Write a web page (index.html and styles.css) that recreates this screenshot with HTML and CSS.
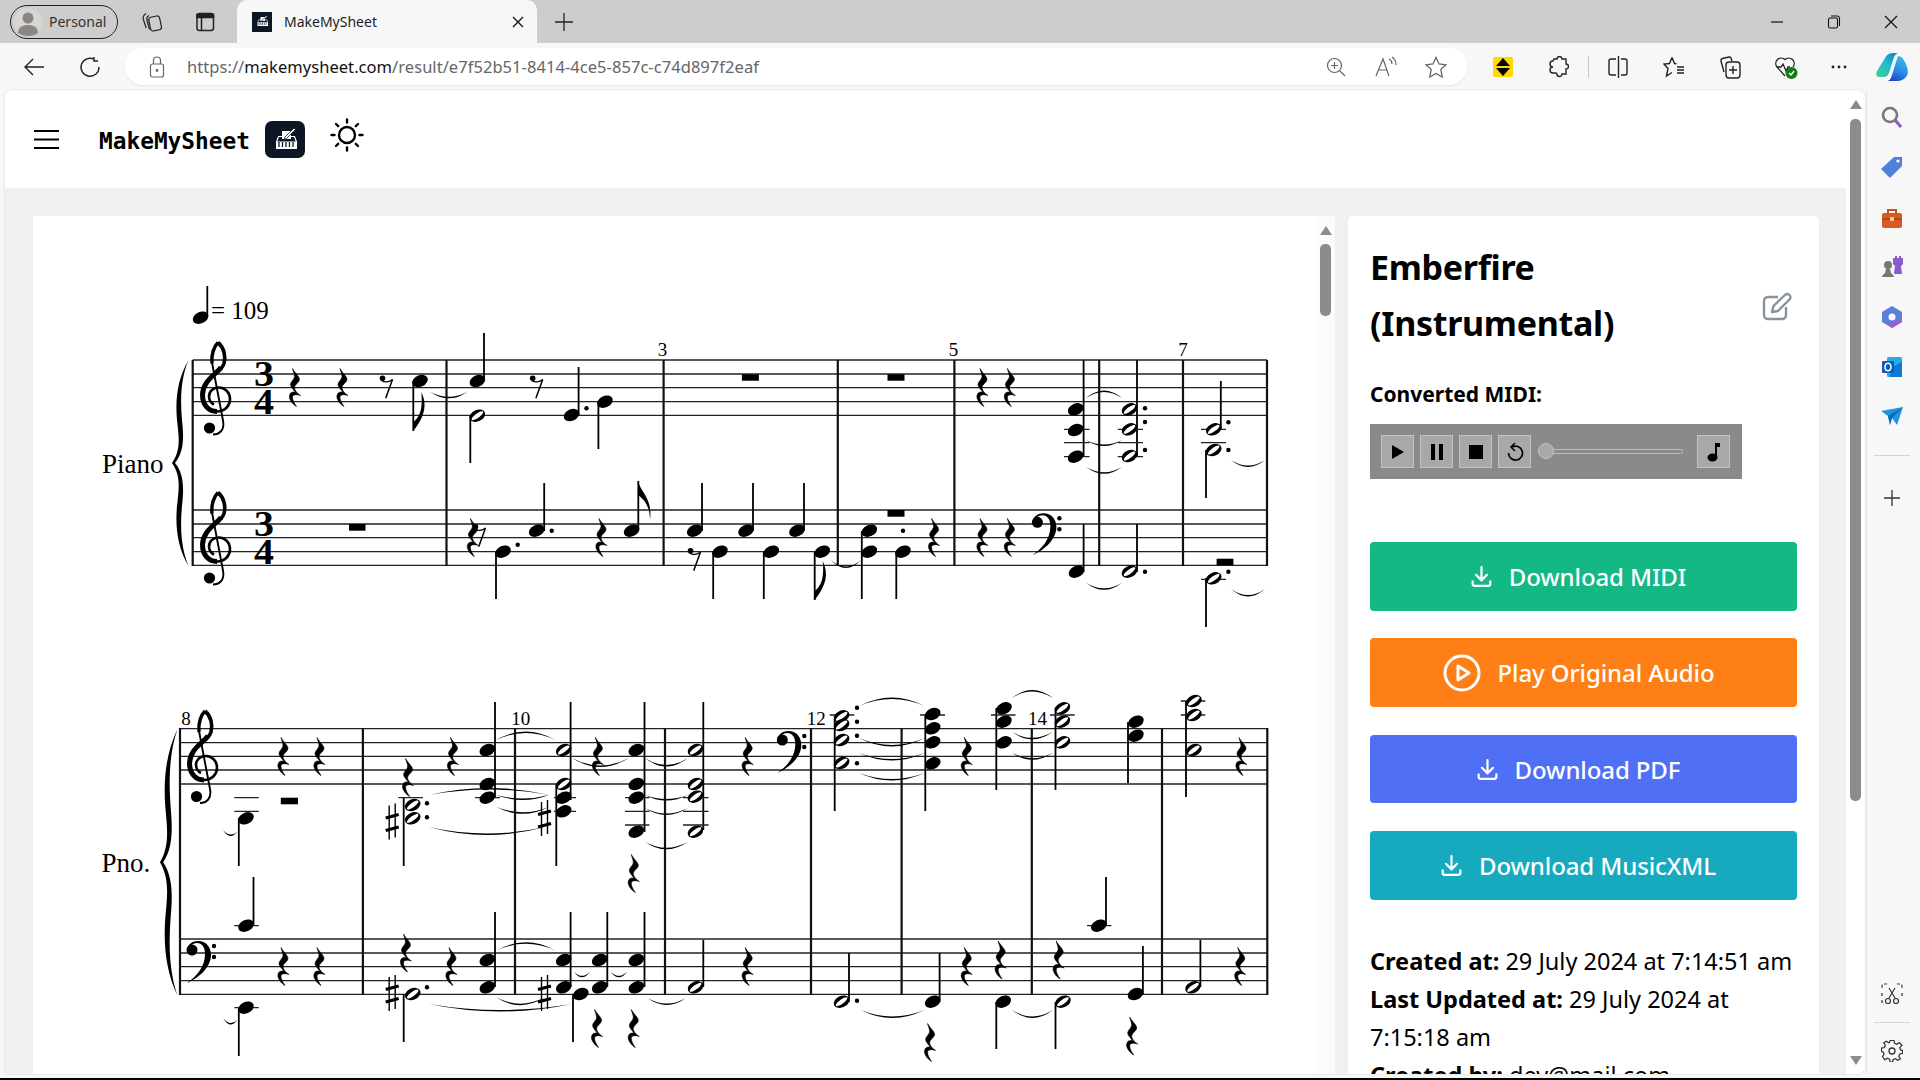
FILE: index.html
```html
<!DOCTYPE html>
<html lang="en">
<head>
    <meta charset="UTF-8">
    <title>MakeMySheet</title>
    <link rel="stylesheet" href="styles.css">
</head>
<body>

    <svg class="sprites" width="0" height="0">
        <defs>
            <g id="logo-mark">
                <path d="M13.500 15.500h16l2 5.500H11.500z" fill="none" stroke="#fff" stroke-width="1.200"/>
                <path d="M11 21h21v7H11z" fill="#fff"/>
                <path d="M14 21v5M17.500 21v5M21 21v5M24.500 21v5M28 21v5" stroke="#0d1624" stroke-width="1.300"/>
                <path d="M17 10h9v8h-9z" fill="#fff"/>
                <path d="M20 16l9-9 1.500 1.500-9 9-2.500 1z" fill="#fff" stroke="#0d1624" stroke-width=".8"/>
            </g>
            <path id="dl" d="M4 17v2a2 2 0 0 0 2 2h12a2 2 0 0 0 2-2v-2M7 11l5 5 5-5M12 4v12" fill="none" stroke="#fff" stroke-width="2" stroke-linecap="round" stroke-linejoin="round"/>

            <g id="n"><ellipse rx="8.200" ry="5.700" transform="rotate(-25)"/></g>
            <g id="h"><ellipse rx="8.200" ry="5.700" transform="rotate(-25)"/><ellipse rx="7" ry="2.200" transform="rotate(-36)" fill="#fff"/></g>
            <path id="qr" stroke="#000" stroke-width=".6" d="M-3-19C-1-15 4-11 4-8 4-5-1-3-1 0-1 3 2 6 5 8 1 6.500-3.500 7-3 10-3 13-1 16 1 19-3 17-7 11-6 8-5.500 4.500-2 4 0 5-3 1-5-1-5-3-5-6-1-8-1-11-1-14-2.500-16-3-19Z"/>
            <g id="er">
                <circle cx="-2" cy="-8.700" r="2.800"/>
                <path d="M-3-6.500C0-4.500 5-4.500 8-7.500" fill="none" stroke="#000" stroke-width="1.200"/>
                <path d="M8-7.500L1.200 11.300" fill="none" stroke="#000" stroke-width="1.500"/>
            </g>
            <g id="sh"><path d="M-3-17V17M3-19V15" stroke-width="1.400"/><path d="M-6.500-4.500L6.500-8M-6.500 8L6.500 4.500" stroke-width="3.200"/></g>
            <path id="fd" d="M0 0V-9C5-13 10-19 8-39 14-27 12-15 0 0Z"/>
            <path id="brace" d="M16.500 0C6 18 3 38 5 60 7 78 9 90 0 103 9 116 7 128 5 146 3 168 6 188 16.500 206 9 188 8 168 10 146 12 128 12 114 3 103 12 92 12 78 10 60 8 38 9 18 16.500 0Z"/>
            <g id="tc" fill="none" stroke="#000">
                <path d="M13 21C12 12 15 4 19 0" stroke-width="3.400"/>
                <path d="M19 0C25 5 27 14 25 21 24 24 23 25 22 26" stroke-width="3.600"/>
                <path d="M22 25C17 32 4 38 3.500 52 3.500 63 10 69 18 69" stroke-width="5"/>
                <path d="M18 69C26 69 31 63 31 57 31 49 25 45 20 45 14 45 10 49 10 54 10 58 13 61 15 62" stroke-width="2.600"/>
                <path d="M13 20L24 78C26 88 20 92 14 92" stroke-width="1.900"/>
                <circle cx="10.500" cy="85.500" r="5.600" fill="#000" stroke="none"/>
            </g>
            <g id="bc">
                <path d="M1 10C1 3 7 0 12 0 21 0 25 7 25 14 25 26 13 37 1 42 10 36 19 26 19 13 19 6 16 2 11 2 7 2 4 5 4 8Z"/>
                <circle cx="6" cy="9" r="5.500"/><circle cx="28" cy="5" r="2.200"/><circle cx="28" cy="16" r="2.200"/>
            </g>
        </defs>
    </svg>

    <header class="tabbar">
        <div class="profile">
            <svg class="avatar" viewBox="0 0 28 28"><circle cx="14" cy="14" r="14" fill="#d8d6d2"/><circle cx="14" cy="10" r="5.500" fill="#8a8682"/><path d="M4 25c0-6 5-8 10-8s10 2 10 8c-3 2-6 3-10 3s-7-1-10-3z" fill="#8a8682"/></svg>
            <span>Personal</span>
        </div>
        <button class="tabicon"><svg width="22" height="22" viewBox="0 0 22 22" fill="none" stroke="#222" stroke-width="1.200"><rect x="8.500" y="5.500" width="11" height="14" rx="2.500" transform="rotate(-12 14 12)"/><path d="M8 4.500C6 5.500 5.500 7 6 9l2.500 9.500M5 2.500C2.500 4 1.500 6 2.500 9l2.700 8"/></svg></button>
        <button class="tabicon"><svg width="20" height="20" viewBox="0 0 20 20" fill="none" stroke="#222" stroke-width="1.500"><rect x="2" y="1.500" width="16.500" height="17" rx="2.500"/><path d="M2 2.500h16.500v3H2z" fill="#222"/><path d="M6.500 5.500v13"/></svg></button>
        <div class="tab">
            <svg class="favicon" viewBox="0 0 40 40"><rect width="40" height="40" fill="#0d1624"/><use href="#logo-mark"/></svg>
            <span class="tab-title">MakeMySheet</span>
            <svg class="tab-close" width="12" height="12" viewBox="0 0 12 12" stroke="#111" stroke-width="1.300"><path d="M1 1l10 10M11 1L1 11"/></svg>
        </div>
        <svg class="newtab" width="18" height="18" viewBox="0 0 18 18" stroke="#222" stroke-width="1.300"><path d="M9 0v18M0 9h18"/></svg>
        <div class="winctl">
            <svg width="14" height="14" viewBox="0 0 14 14" stroke="#111" stroke-width="1.200"><path d="M1 7h12"/></svg>
            <svg width="14" height="14" viewBox="0 0 14 14" fill="none" stroke="#111" stroke-width="1.100"><rect x="1.500" y="3" width="9" height="10" rx="1.500"/><path d="M4 1h6a2.500 2.500 0 0 1 2.500 2.500V11"/></svg>
            <svg width="14" height="14" viewBox="0 0 14 14" stroke="#111" stroke-width="1.200"><path d="M1 1l12 12M13 1L1 13"/></svg>
        </div>
    </header>

    <div class="toolbar">
        <button class="tool"><svg width="22" height="20" viewBox="0 0 22 20" fill="none" stroke="#222" stroke-width="1.400"><path d="M21 10H2M10 2l-8 8 8 8"/></svg></button>
        <button class="tool"><svg width="22" height="22" viewBox="0 0 22 22" fill="none" stroke="#222" stroke-width="1.400"><path d="M15.500 3.500A9 9 0 1 0 20 11M15 1v4h4"/></svg></button>
        <div class="address">
            <svg width="16" height="22" viewBox="0 0 16 22" fill="none" stroke="#666" stroke-width="1.200"><rect x="1.500" y="8" width="13" height="13" rx="2"/><path d="M4.500 8V4.500a3.500 3.500 0 0 1 7 0V8"/><circle cx="8" cy="14.500" r=".8" fill="#666"/></svg>
            <div class="url">https://<b>makemysheet.com</b>/result/e7f52b51-8414-4ce5-857c-c74d897f2eaf</div>
            <button class="addr-icon"><svg width="20" height="20" viewBox="0 0 20 20" fill="none" stroke="#666" stroke-width="1.200"><circle cx="8.500" cy="8.500" r="7"/><path d="M13.500 13.500L19 19M5 8.500h7M8.500 5v7"/></svg></button>
            <button class="addr-icon"><svg width="22" height="22" viewBox="0 0 22 22" fill="none" stroke="#666" stroke-width="1.200"><path d="M1 20L8 3l6 17M3.500 14h9M14 3c2 1 3 3 3 5M17 1c3 2 4 5 4 8"/></svg></button>
            <button class="addr-icon"><svg width="22" height="22" viewBox="0 0 22 22" fill="none" stroke="#666" stroke-width="1.300"><path d="M11 1.500l3 6.500 7 .8-5.200 4.800L17.300 21 11 17.400 4.700 21l1.500-7.400L1 8.800 8 8z"/></svg></button>
        </div>
        <button class="tool first-ext"><svg width="20" height="20" viewBox="0 0 20 20"><rect width="20" height="20" rx="2" fill="#ffd800"/><path d="M10 1l7 8H3zM10 19l-7-8h14z"/></svg></button>
        <button class="tool"><svg width="20" height="22" viewBox="0 0 20 22" fill="none" stroke="#222" stroke-width="1.400"><path d="M8 3a2.500 2.500 0 0 1 5 0h4v5a2.500 2.500 0 0 1 0 5v5h-4a2.500 2.500 0 0 1-5 0l-1-1H4a2 2 0 0 1 0-6 2 2 0 0 1 0-6l1-2z"/></svg></button>
        <span class="tool-sep"></span>
        <button class="tool"><svg width="22" height="24" viewBox="0 0 22 24" fill="none" stroke="#222" stroke-width="1.400"><path d="M9 4H4a2 2 0 0 0-2 2v12a2 2 0 0 0 2 2h5M14 4h4a2 2 0 0 1 2 2v12a2 2 0 0 1-2 2h-4M11.500 1v22"/></svg></button>
        <button class="tool"><svg width="22" height="22" viewBox="0 0 22 22" fill="none" stroke="#222" stroke-width="1.400"><path d="M9 1.500l2.500 6 2 .2M9 1.500l-2.500 6L1 8l4 4.500L3.500 20 9 16.500M14 11h7M14 14h7M14 17h7"/></svg></button>
        <button class="tool"><svg width="22" height="24" viewBox="0 0 22 24" fill="none" stroke="#222" stroke-width="1.400"><path d="M5 17L2 6a2 2 0 0 1 1.500-2.500L10 2a2 2 0 0 1 2 1l1 3"/><rect x="7" y="7" width="14" height="16" rx="3"/><path d="M14 11v8M10 15h8"/></svg></button>
        <button class="tool"><svg width="24" height="24" viewBox="0 0 24 24"><path d="M11 21L3 12a5.500 5.500 0 0 1 8-7.500A5.500 5.500 0 0 1 19 12M3 12h4l2 -3 3 7 2-4h2" fill="none" stroke="#222" stroke-width="1.300"/><circle cx="17.500" cy="18" r="6" fill="#107c10"/><path d="M15 18l2 2 3-4" fill="none" stroke="#fff" stroke-width="1.400"/></svg></button>
        <button class="tool tool-more"><svg width="16" height="4" viewBox="0 0 16 4" fill="#222"><circle cx="2" cy="2" r="1.400"/><circle cx="8" cy="2" r="1.400"/><circle cx="14" cy="2" r="1.400"/></svg></button>
        <button class="tool"><svg width="32" height="28" viewBox="0 0 32 28"><defs><linearGradient id="cp1" x1="0" y1="1" x2=".8" y2="0"><stop offset="0" stop-color="#3fd09a"/><stop offset=".6" stop-color="#22b8cf"/><stop offset="1" stop-color="#1488c8"/></linearGradient><linearGradient id="cp2" x1=".7" y1="0" x2=".3" y2="1"><stop offset="0" stop-color="#3fb8f0"/><stop offset=".6" stop-color="#2a86e8"/><stop offset="1" stop-color="#1c44c8"/></linearGradient></defs><path d="M9 5C11 1 14 0 18 0H22C19 1 18 4 17 7L13 20C12 23 10 24 7 24H3C0 24 0 21 1 18Z" fill="url(#cp1)"/><path d="M22 3C25 3 27 5 29 9 32 15 33 21 30 24 28 26 26 28 20 28H11C14 28 15 25 16 22L20 9C21 6 22 4 22 3Z" fill="url(#cp2)"/></svg></button>
    </div>

    <div class="window">
        <div class="page">
            <div class="viewport">
                <div class="topbar">
                    <svg class="burger" width="25" height="19" viewBox="0 0 25 19" stroke="#000" stroke-width="2"><path d="M0 1h25M0 9.500h25M0 18h25"/></svg>
                    <span class="brand">MakeMySheet</span>
                    <svg class="logo" viewBox="0 0 40 37"><rect width="40" height="37" rx="7" fill="#0d1624"/><use href="#logo-mark"/></svg>
                    <svg class="sun" width="34" height="34" viewBox="0 0 34 34" fill="none" stroke="#000" stroke-width="2.400" stroke-linecap="round"><circle cx="17" cy="17" r="8"/><path d="M17 1.500v3M17 29.500v3M1.500 17h3M29.500 17h3M6 6l2.200 2.200M25.800 25.800L28 28M6 28l2.200-2.200M25.800 8.200L28 6"/></svg>
                </div>

                <main class="content">
                    <section class="score-pane">
                        <svg class="score" viewBox="33 216 1283 862" width="1283" height="862">
                            <!-- first system -->
                            <path class="staff" d="M192.700 360H1267M192.700 374H1267M192.700 387.700H1267M192.700 401.700H1267M192.700 415.300H1267M192.700 510H1267M192.700 524H1267M192.700 537.700H1267M192.700 551.700H1267M192.700 565.300H1267"/>
                            <path class="bar" d="M192.700 360V566M446.500 360V566M663.600 360V566M837.800 360V566M954.400 360V566M1099.200 360V566M1183 360V566M1267 360V566"/>
                            <path class="stem" d="M207.300 286V317M413.300 381V431M484 333V381M470.300 416V463M578.600 367V415M598.400 402V449M496 552V599M544.200 483V531M638.300 481V531M702 483V531M753 483V531M804 483V531M713.200 552V599M763.800 552V599M814.700 552V600M861.800 531V599M896.300 552V599M1083.600 360V457M1137 360V456M1220.800 381V429M1206 450V498M1083.600 524V572M1137 524V572M1206 578V627"/>
                            <path class="ledger" d="M1064 429.300H1089.500M1064 442.700H1089.500M1064 456.700H1089.500M1117.700 429.300H1143M1117.700 442.700H1143M1117.700 456.700H1143M1201 429.300H1226M1201 442.700H1226M1201 579.300H1226"/>

                            <use href="#n" x="200.600" y="317.700"/>
                            <text class="tempo" x="211" y="319">= 109</text>
                            <text class="mnum" x="662.500" y="356">3</text>
                            <text class="mnum" x="953.600" y="356">5</text>
                            <text class="mnum" x="1183" y="356">7</text>
                            <text class="instr" x="102" y="473">Piano</text>
                            <use href="#brace" transform="translate(172 360)"/>
                            <use href="#tc" x="199" y="342.500"/>
                            <use href="#tc" x="199" y="492.500"/>
                            <text class="tsig" x="264" y="386" textLength="20" lengthAdjust="spacingAndGlyphs">3</text>
                            <text class="tsig" x="264" y="413.500" textLength="20" lengthAdjust="spacingAndGlyphs">4</text>
                            <text class="tsig" x="264" y="536" textLength="20" lengthAdjust="spacingAndGlyphs">3</text>
                            <text class="tsig" x="264" y="563.500" textLength="20" lengthAdjust="spacingAndGlyphs">4</text>

                            <use href="#qr" x="295.500" y="387.500"/>
                            <use href="#qr" x="343" y="387.500"/>
                            <use href="#er" x="384.500" y="387"/>
                            <use href="#n" x="420" y="381"/>
                            <use href="#fd" transform="translate(413.300 431)"/>
                            <use href="#n" x="477.400" y="381"/>
                            <use href="#er" x="534.700" y="387"/>
                            <use href="#h" x="477.400" y="415.700"/>
                            <use href="#n" x="571.500" y="415"/>
                            <circle cx="586.500" cy="408.300" r="2.200"/>
                            <use href="#n" x="605" y="401.700"/>
                            <rect x="741.900" y="374.300" width="17" height="6.400"/>
                            <rect x="887.500" y="374.300" width="17" height="6.400"/>
                            <use href="#qr" x="983" y="387.500"/>
                            <use href="#qr" x="1010.400" y="387.500"/>
                            <use href="#n" x="1075.600" y="409.300"/>
                            <use href="#n" x="1075.600" y="430"/>
                            <use href="#n" x="1075.600" y="456.700"/>
                            <use href="#h" x="1129.500" y="409.300"/>
                            <use href="#h" x="1129.500" y="429.300"/>
                            <use href="#h" x="1129.500" y="456"/>
                            <circle cx="1145" cy="408.300" r="2.200"/><circle cx="1145" cy="422" r="2.200"/><circle cx="1145" cy="450" r="2.200"/>
                            <use href="#h" x="1213.700" y="429.300"/>
                            <use href="#h" x="1213.700" y="450"/>
                            <circle cx="1228.400" cy="422.300" r="2.200"/><circle cx="1228.400" cy="450" r="2.200"/>

                            <rect x="349" y="524" width="16.500" height="6.700"/>
                            <use href="#qr" x="473.400" y="537.500"/>
                            <use href="#er" x="477.500" y="535.500"/>
                            <use href="#n" x="503" y="551.700"/>
                            <circle cx="517.700" cy="544.700" r="2.200"/>
                            <use href="#n" x="536.700" y="530.700"/>
                            <circle cx="551.700" cy="530.700" r="2.200"/>
                            <use href="#qr" x="602" y="537.500"/>
                            <use href="#n" x="631.600" y="530.700"/>
                            <path d="M638.300 481C640 492 653 498 650 520 650 505 643 499 638.300 495Z"/>
                            <use href="#n" x="694.700" y="530.700"/>
                            <use href="#n" x="746" y="530.700"/>
                            <use href="#n" x="797" y="530.700"/>
                            <use href="#er" x="692.500" y="559.500"/>
                            <use href="#n" x="720" y="551.700"/>
                            <use href="#n" x="771.300" y="551.700"/>
                            <use href="#n" x="822.300" y="551.700"/>
                            <use href="#fd" transform="translate(814.700 600)"/>
                            <use href="#n" x="869.400" y="530.700"/>
                            <use href="#n" x="869.400" y="551.700"/>
                            <rect x="887.500" y="510" width="17" height="6.700"/>
                            <circle cx="903" cy="530.700" r="2.200"/>
                            <use href="#n" x="903" y="551.700"/>
                            <use href="#qr" x="934.600" y="537.500"/>
                            <use href="#qr" x="983" y="537.500"/>
                            <use href="#qr" x="1010.400" y="537.500"/>
                            <use href="#bc" x="1031.400" y="513.300"/>
                            <use href="#n" x="1076.500" y="571.700"/>
                            <use href="#h" x="1129.500" y="571.700"/>
                            <circle cx="1145" cy="571.700" r="2.200"/>
                            <use href="#h" x="1213.700" y="578.300"/>
                            <circle cx="1228.400" cy="571.700" r="2.200"/>
                            <rect x="1216.600" y="558.700" width="16.800" height="6.600"/>

                            <path d="M430 391.700Q449 405 467.500 391.700Q449 402 430 391.700ZM1086 398Q1104 383 1122 398Q1104 386 1086 398ZM1086 440Q1104 452 1122 440Q1104 449 1086 440ZM1086 466.700Q1104 481 1122 466.700Q1104 478 1086 466.700ZM1231 460Q1248 474 1265 460Q1248 471 1231 460ZM830.700 560Q846 576 861 560Q846 573 830.700 560ZM1086 582.700Q1104 597 1122 582.700Q1104 594 1086 582.700ZM1231 589Q1248 604 1265 589Q1248 601 1231 589Z"/>

                            <!-- second system -->
                            <path class="staff" d="M180 728.700H1267.300M180 742.700H1267.300M180 756.300H1267.300M180 770H1267.300M180 784H1267.300M180 939H1267.300M180 953H1267.300M180 966.700H1267.300M180 980.700H1267.300M180 994.300H1267.300"/>
                            <path class="bar" d="M180 728V995M362.900 728V995M515 728V995M665 728V995M811 728V995M901.600 728V995M1031.800 728V995M1162 728V995M1267.300 728V995"/>
                            <path class="stem" d="M238.800 818V866M253.500 877V926M238.800 1008V1056M403.700 798V866M495 702V797M570.600 702V800M556.300 784V866M644.500 702V832M703.300 702V830M834.700 716V811M925.300 714V811M996.300 708V790M1055.500 708V790M1128 722V783M1186 701V797M403.700 994V1042M495 912V987M570.600 912V987M573 994V1042M607.300 912V987M644.500 912V987M703.300 940V987M849 953V1002M939.600 953V1002M996.300 1002V1049M1055.500 1002V1049M1106 877V926M1142.900 946V994M1200.400 940V987"/>
                            <path class="ledger" d="M234.300 797.700H258.800M234.300 811.300H258.800M234.300 925.700H258.800M234.300 1007.700H258.800M398.400 797.700H422.900M475 797.700H500M554 797.700H576M554 811.300H576M625 797.700H649.400M625 811.300H649.400M625 825H649.400M683 797.700H708.600M683 811.300H708.600M683 825H708.600M829.800 715H854.300M920 715H945M991 715H1015.500M1050 715H1074.700M1180.800 701H1205.300M1180.800 715H1205.300M1087 925.700H1111.400"/>

                            <text class="mnum" x="186" y="725">8</text>
                            <text class="mnum" x="520.800" y="725">10</text>
                            <text class="mnum" x="816.300" y="725">12</text>
                            <text class="mnum" x="1037.600" y="725">14</text>
                            <text class="instr" x="101.500" y="872.300">Pno.</text>
                            <use href="#brace" transform="translate(160 729) scale(1.060 1.294)"/>
                            <use href="#tc" x="186" y="711"/>
                            <use href="#bc" transform="translate(186 941)"/>

                            <use href="#qr" x="284" y="756.500"/>
                            <use href="#qr" x="320" y="756.500"/>
                            <use href="#n" x="246" y="818.300"/>
                            <rect x="280.800" y="797.700" width="17.200" height="6.600"/>
                            <use href="#n" x="246" y="925.700"/>
                            <use href="#qr" x="284" y="966.500"/>
                            <use href="#qr" x="320" y="966.500"/>
                            <use href="#n" x="246" y="1007.700"/>
                            <use href="#qr" x="408.600" y="777.500"/>
                            <use href="#qr" x="453.500" y="756.500"/>
                            <use href="#sh" class="acc" x="392.200" y="822.500"/>
                            <use href="#h" x="412.700" y="805"/>
                            <use href="#h" x="412.700" y="818.300"/>
                            <circle cx="427" cy="803.300" r="2.200"/><circle cx="427" cy="817.300" r="2.200"/>
                            <use href="#n" x="487.300" y="750"/>
                            <use href="#n" x="487.300" y="784"/>
                            <use href="#n" x="487.300" y="797.700"/>
                            <use href="#h" x="563.700" y="750"/>
                            <use href="#h" x="563.700" y="784"/>
                            <use href="#n" x="563.700" y="797.700"/>
                            <use href="#n" x="563.700" y="811.300"/>
                            <use href="#sh" class="acc" x="544.500" y="819"/>
                            <use href="#qr" x="598.400" y="756.500"/>
                            <use href="#n" x="636.300" y="750"/>
                            <use href="#n" x="636.300" y="784"/>
                            <use href="#n" x="636.300" y="797.700"/>
                            <use href="#n" x="636.300" y="831.700"/>
                            <use href="#qr" x="634.300" y="873.500"/>
                            <use href="#h" x="695.500" y="750"/>
                            <use href="#h" x="695.500" y="784"/>
                            <use href="#h" x="695.500" y="796.700"/>
                            <use href="#h" x="695.500" y="831.700"/>
                            <use href="#qr" x="748.200" y="756.500"/>
                            <use href="#bc" x="776.300" y="729" transform="translate(0 2)"/>
                            <use href="#h" x="841.600" y="716.300"/>
                            <use href="#h" x="841.600" y="725"/>
                            <use href="#h" x="841.600" y="740"/>
                            <use href="#h" x="841.600" y="763"/>
                            <circle cx="857" cy="707.700" r="2.200"/><circle cx="857" cy="721.700" r="2.200"/><circle cx="857" cy="735.700" r="2.200"/><circle cx="857" cy="763.300" r="2.200"/>
                            <use href="#n" x="932.700" y="714"/>
                            <use href="#n" x="932.700" y="728.300"/>
                            <use href="#n" x="932.700" y="742.300"/>
                            <use href="#n" x="932.700" y="763.300"/>
                            <use href="#qr" x="967.300" y="756.500"/>
                            <use href="#n" x="1004" y="708.300"/>
                            <use href="#n" x="1004" y="721.700"/>
                            <use href="#n" x="1004" y="742.300"/>
                            <use href="#h" x="1062.400" y="708.300"/>
                            <use href="#h" x="1062.400" y="721.700"/>
                            <use href="#h" x="1062.400" y="742.300"/>
                            <use href="#n" x="1136" y="721.700"/>
                            <use href="#n" x="1136" y="735.700"/>
                            <use href="#h" x="1193.900" y="701"/>
                            <use href="#h" x="1193.900" y="715"/>
                            <use href="#h" x="1193.900" y="750"/>
                            <use href="#qr" x="1242" y="756.500"/>

                            <use href="#qr" x="406.500" y="953"/>
                            <use href="#qr" x="452" y="966.500"/>
                            <use href="#sh" class="acc" x="392.200" y="994"/>
                            <use href="#h" x="412.700" y="994"/>
                            <circle cx="427" cy="987.300" r="2.200"/>
                            <use href="#n" x="487.300" y="960"/>
                            <use href="#n" x="487.300" y="987.300"/>
                            <use href="#sh" class="acc" x="544.500" y="994"/>
                            <use href="#n" x="563.700" y="960"/>
                            <use href="#n" x="563.700" y="987.300"/>
                            <use href="#n" x="580.800" y="994"/>
                            <use href="#n" x="599.600" y="960"/>
                            <use href="#n" x="599.600" y="987.300"/>
                            <use href="#n" x="636.300" y="960"/>
                            <use href="#n" x="636.300" y="987.300"/>
                            <use href="#qr" x="597.600" y="1028.500"/>
                            <use href="#qr" x="634.300" y="1028.500"/>
                            <use href="#h" x="695.500" y="987.300"/>
                            <use href="#qr" x="748.200" y="966.500"/>
                            <use href="#h" x="841.600" y="1001.700"/>
                            <circle cx="857" cy="1000.700" r="2.200"/>
                            <use href="#n" x="932.700" y="1001.700"/>
                            <use href="#qr" x="930.600" y="1042.500"/>
                            <use href="#qr" x="967.300" y="966.500"/>
                            <use href="#qr" x="1001.200" y="960"/>
                            <use href="#n" x="1003.300" y="1001.700"/>
                            <use href="#h" x="1063" y="1001.700"/>
                            <use href="#qr" x="1059.200" y="960"/>
                            <use href="#n" x="1098.800" y="925.700"/>
                            <use href="#n" x="1135.500" y="994"/>
                            <use href="#qr" x="1132.700" y="1036"/>
                            <use href="#h" x="1193" y="987.300"/>
                            <use href="#qr" x="1240.800" y="966.500"/>

                            <path d="M223 830Q230 841 237 832Q230 838 223 830ZM223 1018Q230 1030 237 1020Q230 1027 223 1018ZM496 740Q526 723 555.500 740Q526 726 496 740ZM429 795Q489 781 549.400 795Q489 784 429 795ZM496 795Q523 805 549 795Q523 802 496 795ZM496 806.700Q523 821 549 806.700Q523 818 496 806.700ZM429 827Q487 843 545 827Q487 840 429 827ZM572 758Q600 776 629 758Q600 773 572 758ZM645 758Q666 775 688 758Q666 772 645 758ZM645 795Q666 806 688 795Q666 803 645 795ZM645 808Q666 822 688 808Q666 819 645 808ZM645 841.700Q666 857 688 841.700Q666 854 645 841.700ZM496 950.700Q526 934 555.500 950.700Q526 937 496 950.700ZM496 997.300Q520 1013 545 997.300Q520 1010 496 997.300ZM429 1004Q500 1019 572 1004Q500 1016 429 1004ZM574 971.700Q582 983 590 971.700Q582 980 574 971.700ZM610.600 971.700Q619 983 627 971.700Q619 980 610.600 971.700ZM647.300 998Q667 1012 686 998Q667 1009 647.300 998ZM859 706Q892 689 924.500 706Q892 692 859 706ZM859 738Q892 755 924.500 738Q892 752 859 738ZM859 753Q892 768 924.500 753Q892 765 859 753ZM859 773Q892 788 924.500 773Q892 785 859 773ZM1012 698Q1032 682 1053 698Q1032 685 1012 698ZM1012 731.700Q1032 747 1053 731.700Q1032 744 1012 731.700ZM1012 752.700Q1032 767 1053 752.700Q1032 764 1012 752.700ZM861 1010Q892 1026 924.500 1010Q892 1023 861 1010ZM1012 1010Q1032 1026 1053 1010Q1032 1023 1012 1010Z"/>
                        </svg>
                        <div class="score-scroll">
                            <span class="arrow-up"></span>
                            <span class="score-thumb"></span>
                        </div>
                    </section>

                    <aside class="info">
                        <div class="title-row">
                            <h1>Emberfire (Instrumental)</h1>
                            <svg class="edit" width="30" height="29" viewBox="0 0 30 29" fill="none" stroke="#8a9299" stroke-width="2.400" stroke-linejoin="round"><path d="M16 5H6a4 4 0 0 0-4 4v14a4 4 0 0 0 4 4h14a4 4 0 0 0 4-4V15"/><path d="M10 20l1.500-6L23 3a3 3 0 0 1 4.500 4.500L16 19z"/></svg>
                        </div>
                        <p class="label">Converted MIDI:</p>
                        <div class="player">
                            <button class="pbtn"><svg width="14" height="16" viewBox="0 0 14 16"><path d="M1 1l12 7-12 7z"/></svg></button>
                            <button class="pbtn"><svg width="14" height="16" viewBox="0 0 14 16"><path d="M1 0h4v16H1zM9 0h4v16H9z"/></svg></button>
                            <button class="pbtn"><svg width="14" height="14" viewBox="0 0 14 14"><path d="M0 0h14v14H0z"/></svg></button>
                            <button class="pbtn"><svg width="18" height="20" viewBox="0 0 18 20" fill="none" stroke="#000" stroke-width="1.700"><path d="M6 5a7 7 0 1 1-3.500 6"/><path d="M9 1L5 5l4 4" stroke-width="1.500"/></svg></button>
                            <div class="slider"><span class="slider-thumb"></span></div>
                            <button class="pbtn"><svg width="14" height="20" viewBox="0 0 14 20"><ellipse cx="5.500" cy="15.500" rx="5" ry="4"/><path d="M8 1h5v4H10v10H8z"/></svg></button>
                        </div>
                        <a class="btn btn-midi"><svg width="21" height="21" viewBox="3 3 18 19"><use href="#dl"/></svg>Download MIDI</a>
                        <a class="btn btn-audio"><svg width="38" height="38" viewBox="0 0 38 38" fill="none" stroke="#fff" stroke-width="3" stroke-linejoin="round"><circle cx="19" cy="19" r="17"/><path d="M15 12l11 7-11 7z"/></svg>Play Original Audio</a>
                        <a class="btn btn-pdf"><svg width="21" height="21" viewBox="3 3 18 19"><use href="#dl"/></svg>Download PDF</a>
                        <a class="btn btn-xml"><svg width="21" height="21" viewBox="3 3 18 19"><use href="#dl"/></svg>Download MusicXML</a>
                        <div class="meta">
                            <p><b>Created at:</b> 29 July 2024 at 7:14:51 am</p>
                            <p><b>Last Updated at:</b> 29 July 2024 at 7:15:18 am</p>
                            <p><b>Created by:</b> dev@mail.com</p>
                        </div>
                    </aside>
                </main>
            </div>
            <div class="page-scroll">
                <span class="arrow-up"></span>
                <span class="page-thumb"></span>
                <span class="arrow-down"></span>
            </div>
        </div>

        <nav class="sidebar">
            <svg width="24" height="24" viewBox="0 0 24 24" fill="none"><circle cx="10" cy="10" r="7" stroke="#777" stroke-width="2.600"/><path d="M15 15l6 7" stroke="#8a5cc8" stroke-width="3.200"/></svg>
            <svg width="24" height="24" viewBox="0 0 24 24"><path d="M14 2h8v9L10 23 1 14z" fill="#4e80dc"/><circle cx="18" cy="6" r="1.600" fill="#fff"/></svg>
            <svg width="24" height="24" viewBox="0 0 24 24"><path d="M8 8V5h8v3" fill="none" stroke="#c8501e" stroke-width="2"/><rect x="2" y="8" width="20" height="15" rx="2" fill="#d85a22"/><path d="M2 14h20" stroke="#a84015" stroke-width="1.500"/><rect x="10" y="12" width="4" height="4" fill="#f5c0a0"/></svg>
            <svg width="24" height="24" viewBox="0 0 24 24"><path d="M15 1h2v2h2V1h2v2h2v6l-2 2 1 8h-8l1-8-2-2V3h2z" fill="#8a5cc8"/><circle cx="8" cy="10" r="4" fill="#777"/><path d="M2 22c0-2 2-3 3-4l1-4h4l1 4c1 1 3 2 3 4z" fill="#777"/></svg>
            <svg width="24" height="24" viewBox="0 0 24 24"><path d="M12 1l10 6v10l-10 6L2 17V7z" fill="#5d7fdc"/><path d="M2 7l10 6 10 4-10 6-4-3 8-4-8-5z" fill="#a45ccc"/><circle cx="12" cy="12" r="3.500" fill="#f7f7f7"/></svg>
            <svg width="24" height="24" viewBox="0 0 24 24"><rect x="7" y="2" width="15" height="20" rx="1.500" fill="#28a8ea"/><path d="M12 12l10-5v15H10z" fill="#0f78d4"/><rect x="2" y="6" width="12" height="12" rx="1" fill="#0a5fb4"/><ellipse cx="8" cy="12" rx="3" ry="3.800" fill="none" stroke="#fff" stroke-width="1.500"/></svg>
            <svg width="24" height="24" viewBox="0 0 24 24"><path d="M1 6l22-4-6 18-5-7-2 7-2-9z" fill="#1e95e0"/><path d="M8 11L23 2 12 13l-2 7z" fill="#0b6bb8"/></svg>
            <span class="side-sep"></span>
            <svg class="side-plus" width="16" height="16" viewBox="0 0 16 16" stroke="#333" stroke-width="1.300"><path d="M8 0v16M0 8h16"/></svg>
            <span class="side-gap"></span>
            <svg class="side-tool" width="22" height="22" viewBox="0 0 22 22" fill="none" stroke="#333" stroke-width="1.200"><path d="M6 1H3a2 2 0 0 0-2 2v3M16 1h3a2 2 0 0 1 2 2v3M21 10v3M1 10v4M1 17v2a2 2 0 0 0 2 2" stroke-dasharray="3 1.500"/><path d="M8 5l6 10M14 5L8 15"/><circle cx="7" cy="18" r="2.500"/><circle cx="15" cy="18" r="2.500"/></svg>
            <span class="side-sep side-sep-low"></span>
            <svg class="side-tool side-gear" width="22" height="22" viewBox="0 0 22 22" fill="none" stroke="#333" stroke-width="1.300"><circle cx="11" cy="11" r="3"/><path d="M9 1h4l.6 3 2.400 1 2.500-1.700 2.800 2.800L19 8.500l1 2.400 2 .6v3l-3 .6-1 2.400 1.700 2.500-2.800 1.700-2.400-1.700-2.500 1-.6 2.500H9l-.6-3-2.400-1-2.500 1.700L1 17.800l1.700-2.400-1-2.400L0 12.500V9l3-.6 1-2.400L2.300 3.500 5 1.700 7.500 3.400 8.400 3z" transform="translate(.5 -.5) scale(.96)"/></svg>
        </nav>
    </div>

</body>
</html>
```

FILE: styles.css
```css
* {
    box-sizing: border-box;
}

html, body {
    margin: 0;
    width: 1920px;
    height: 1080px;
    overflow: hidden;
}

body {
    display: flex;
    flex-direction: column;
    font-family: "Noto Sans", "Open Sans", sans-serif;
    background-color: #f7f7f7;
    border-bottom: 2px solid #000;
    color: #000;
}

button {
    border: 0;
    padding: 0;
    background: none;
    font: inherit;
}

p, h1 {
    margin: 0;
}

.sprites {
    position: absolute;
}

/* browser tabs */
.tabbar {
    flex: none;
    height: 43px;
    display: flex;
    align-items: center;
    padding-left: 10px;
    background-color: #cdcdcd;
}

.profile {
    width: 108px;
    height: 34px;
    display: flex;
    align-items: center;
    gap: 7px;
    padding-left: 3px;
    border: 1.5px solid #222;
    border-radius: 17px;
    font-size: 14px;
    color: #333;
}

.avatar {
    width: 28px;
    height: 28px;
    flex: none;
}

.tabicon {
    width: 53px;
    height: 30px;
    display: flex;
    align-items: center;
    justify-content: center;
}

.tabicon:first-of-type {
    margin-left: 7px;
}

.tab {
    width: 300px;
    height: 43px;
    margin-left: 6px;
    display: flex;
    align-items: center;
    padding: 0 13px 0 15px;
    background-color: #f7f7f7;
    border-radius: 10px 10px 0 0;
    font-size: 14px;
}

.favicon {
    width: 20px;
    height: 20px;
    flex: none;
}

.tab-title {
    flex: 1;
    margin-left: 12px;
    color: #222;
}

.newtab {
    margin-left: 18px;
}

.winctl {
    margin-left: auto;
    display: flex;
    gap: 43px;
    padding-right: 22px;
}

/* address row */
.toolbar {
    flex: none;
    height: 47px;
    display: flex;
    align-items: center;
    padding-left: 6px;
}

.tool {
    width: 56px;
    height: 40px;
    flex: none;
    display: flex;
    align-items: center;
    justify-content: center;
}

.first-ext {
    margin-left: 8px;
}

.tool-sep {
    width: 1px;
    height: 22px;
    margin: 0 1px;
    background-color: #c8c8c8;
}

.tool-more {
    width: 50px;
}

.address {
    width: 1343px;
    height: 37px;
    margin-left: 7px;
    display: flex;
    align-items: center;
    padding: 0 6px 0 24px;
    background-color: #fff;
    border-radius: 18px;
    box-shadow: 0 1px 2px rgba(0, 0, 0, 0.08);
}

.url {
    flex: 1;
    margin-left: 22px;
    font-size: 16.5px;
    letter-spacing: 0.05px;
    color: #666;
}

.url b {
    font-weight: 400;
    color: #111;
}

.addr-icon {
    width: 50px;
    height: 30px;
    display: flex;
    align-items: center;
    justify-content: center;
}

/* page area */
.window {
    flex: 1;
    min-height: 0;
    display: flex;
    padding-bottom: 4px;
}

.page {
    width: 1860px;
    margin-left: 5px;
    display: flex;
    overflow: hidden;
    background-color: #fff;
    border-radius: 8px 8px 8px 0;
    box-shadow: 0 0 2px rgba(0, 0, 0, 0.18);
}

.viewport {
    width: 1841px;
    display: flex;
    flex-direction: column;
}

.topbar {
    flex: none;
    height: 98px;
    display: flex;
    align-items: center;
    padding-left: 29px;
    background-color: #fff;
}

.brand {
    margin-left: 40px;
    margin-top: 3px;
    font-family: "DejaVu Sans Mono", monospace;
    font-size: 22.8px;
    font-weight: 700;
}

.logo {
    width: 40px;
    height: 37px;
    margin-left: 15px;
}

.sun {
    margin-left: 25px;
    margin-top: -8px;
}

.content {
    flex: 1;
    min-height: 0;
    display: flex;
    align-items: flex-start;
    gap: 13px;
    padding: 28px 0 0 28px;
    background-color: #f0f0f0;
}

.score-pane {
    width: 1302px;
    height: 900px;
    display: flex;
    background-color: #fff;
}

.score {
    flex: none;
    display: block;
}

.score .staff {
    fill: none;
    stroke: #222;
    stroke-width: 1.3;
}

.score .bar {
    fill: none;
    stroke: #111;
    stroke-width: 2.2;
}

.score .stem {
    fill: none;
    stroke: #000;
    stroke-width: 1.8;
}

.score .ledger {
    fill: none;
    stroke: #222;
    stroke-width: 1.3;
}

.score text {
    font-family: "Liberation Serif", serif;
}

.score .tempo {
    font-size: 25px;
}

.score .mnum {
    font-size: 19px;
    text-anchor: middle;
}

.score .instr {
    font-size: 27px;
}

.score .tsig {
    font-size: 35px;
    font-weight: 700;
    text-anchor: middle;
}

.score .acc {
    stroke: #000;
}

.score-scroll {
    width: 19px;
    display: flex;
    flex-direction: column;
    align-items: center;
    padding-top: 10px;
    background-color: #fbfbfb;
}

.score-thumb {
    width: 11px;
    height: 72px;
    margin-top: 9px;
    background-color: #8c8c8c;
    border-radius: 5px;
}

.arrow-up {
    width: 0;
    height: 0;
    border: 6px solid transparent;
    border-top: 0;
    border-bottom: 9px solid #8c8c8c;
}

.arrow-down {
    width: 0;
    height: 0;
    margin-top: auto;
    margin-bottom: 9px;
    border: 6px solid transparent;
    border-bottom: 0;
    border-top: 9px solid #8c8c8c;
}

.page-scroll {
    width: 19px;
    display: flex;
    flex-direction: column;
    align-items: center;
    padding-top: 10px;
    background-color: #fff;
}

.page-thumb {
    width: 11px;
    height: 682px;
    margin-top: 10px;
    background-color: #8c8c8c;
    border-radius: 5px;
}

/* right hand card */
.info {
    width: 471px;
    height: 900px;
    padding: 23px 22px 0;
    background-color: #fff;
    border-radius: 5px;
}

.title-row {
    display: flex;
    align-items: center;
    justify-content: space-between;
}

.title-row h1 {
    width: 300px;
    font-size: 34px;
    line-height: 56px;
    font-weight: 700;
    letter-spacing: -0.3px;
}

.edit {
    margin: 22px 5px 0 0;
}

.label {
    margin-top: 28px;
    font-size: 21px;
    line-height: 30px;
    font-weight: 700;
}

.player {
    width: 372px;
    height: 55px;
    margin-top: 15px;
    display: flex;
    align-items: center;
    gap: 6px;
    padding: 0 12px 0 11px;
    background-color: #8a8a8a;
}

.pbtn {
    width: 33px;
    height: 33px;
    flex: none;
    display: flex;
    align-items: center;
    justify-content: center;
    background-color: #a8a8a8;
    border: 1px solid #c4c4c4;
}

.slider {
    position: relative;
    width: 147px;
    height: 5px;
    margin: 0 8px 0 2px;
    background-color: #8a8a8a;
    border: 1px solid #bdbdbd;
    border-radius: 3px;
}

.slider-thumb {
    position: absolute;
    left: -2px;
    top: -7px;
    width: 16px;
    height: 16px;
    background-color: #a8a8a8;
    border: 1px solid #c4c4c4;
    border-radius: 50%;
}

.btn {
    height: 69px;
    margin-top: 28px;
    padding-right: 10px;
    display: flex;
    align-items: center;
    justify-content: center;
    gap: 17px;
    border-radius: 4px;
    font-size: 24px;
    font-weight: 500;
    letter-spacing: -0.1px;
    color: #fff;
}

.btn-midi {
    margin-top: 63px;
    background-color: #14b885;
}

.btn-audio {
    margin-top: 27px;
    background-color: #ff7f17;
}

.btn-pdf {
    height: 68px;
    background-color: #4f6ff5;
}

.btn-xml {
    background-color: #17aabf;
}

.meta {
    margin-top: 42px;
    font-size: 23.5px;
    line-height: 38px;
}

.meta b {
    font-weight: 700;
}

/* edge sidebar */
.sidebar {
    flex: 1;
    display: flex;
    flex-direction: column;
    align-items: center;
    gap: 26px;
    padding: 15px 4px 12px 0;
    border-left: 1px solid #e4e4e4;
    margin-left: 1px;
}

.side-sep {
    width: 36px;
    height: 1px;
    flex: none;
    background-color: #d4d4d4;
}

.side-sep-low {
    margin-top: -9px;
}

.side-plus {
    margin-top: 8px;
}

.side-gap {
    flex: 1;
}

.side-tool {
    flex: none;
}

.side-gear {
    margin-top: -9px;
}
```
